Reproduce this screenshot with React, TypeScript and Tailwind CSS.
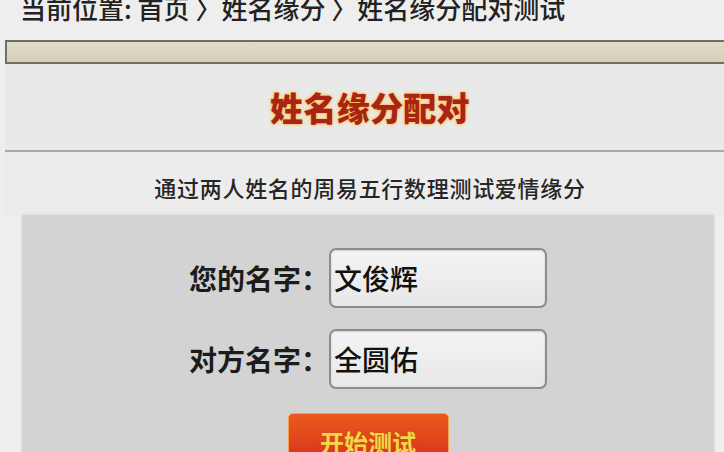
import React from "react";

const cjk = "font-['Noto_Sans_CJK_SC','Noto_Sans',sans-serif]";

function NameRow({ label, value }: { label: string; value: string }) {
  return (
    <div className="flex items-center justify-center">
      <span className="w-[140px] shrink-0 text-[28px] leading-[28px] font-bold text-[#1c1c1c]">
        {label}
      </span>
      <input
        readOnly
        defaultValue={value}
        className={`${cjk} w-[218px] h-[60px] rounded-[7px] border-2 border-[#8c8c8c] bg-gradient-to-b from-[#f3f3f3] to-[#e8e8e8] pl-[3px] text-[28px] font-medium text-[#111] shadow-[inset_0_1px_2px_rgba(0,0,0,0.15)] outline-none`}
      />
    </div>
  );
}

export default function App() {
  return (
    <div className={`${cjk} w-[724px] h-[452px] overflow-hidden bg-[#eeeeee]`}>
      {/* breadcrumb */}
      <div className="h-[40px] pl-[20px] overflow-hidden">
        <div className="-mt-[5px] text-[26px] leading-[26px] font-medium text-[#222] whitespace-nowrap">
          当前位置: 首页 〉姓名缘分 〉姓名缘分配对测试
        </div>
      </div>

      <div className="ml-[5px] w-[730px]">
        {/* beige bar */}
        <div className="h-[24px] border-y-2 border-l-2 border-[#6f6f66] bg-gradient-to-b from-[#e2dcc6] to-[#d6cfb6]" />

        {/* title */}
        <div className="h-[86px] flex items-center justify-center bg-[#e9e9e9]">
          <h1 className="text-[33px] leading-[34px] font-black tracking-[0.3px] text-[#a82418] [text-shadow:0_0_2px_#ffb020,0_0_4px_#ffc860]">
            姓名缘分配对
          </h1>
        </div>
        <div className="h-[2px] bg-[#a8a8a8]" />

        {/* subtitle */}
        <div className="h-[63px] pt-[24px] bg-[#ececec] text-center">
          <p className="text-[22px] leading-[22px] font-medium tracking-[0.7px] text-[#262626]">
            通过两人姓名的周易五行数理测试爱情缘分
          </p>
        </div>

        {/* form box */}
        <div className="ml-[17px] w-[692px] h-[260px] bg-[#d3d3d3] shadow-[0_0_3px_rgba(0,0,0,0.12)] pt-[33px] flex flex-col gap-[21px]">
          <NameRow label="您的名字：" value="文俊辉" />
          <NameRow label="对方名字：" value="全圆佑" />
          <div className="flex justify-center pt-[3px]">
            <button className="w-[161px] h-[60px] pt-[16px] rounded-[5px] border border-[#f3a347] bg-gradient-to-b from-[#e95a1e] to-[#d4221a] text-[24px] leading-[24px] font-bold text-[#f6d548] flex justify-center items-start [text-shadow:0_0_2px_#c0500c]">
              开始测试
            </button>
          </div>
        </div>
      </div>
    </div>
  );
}
